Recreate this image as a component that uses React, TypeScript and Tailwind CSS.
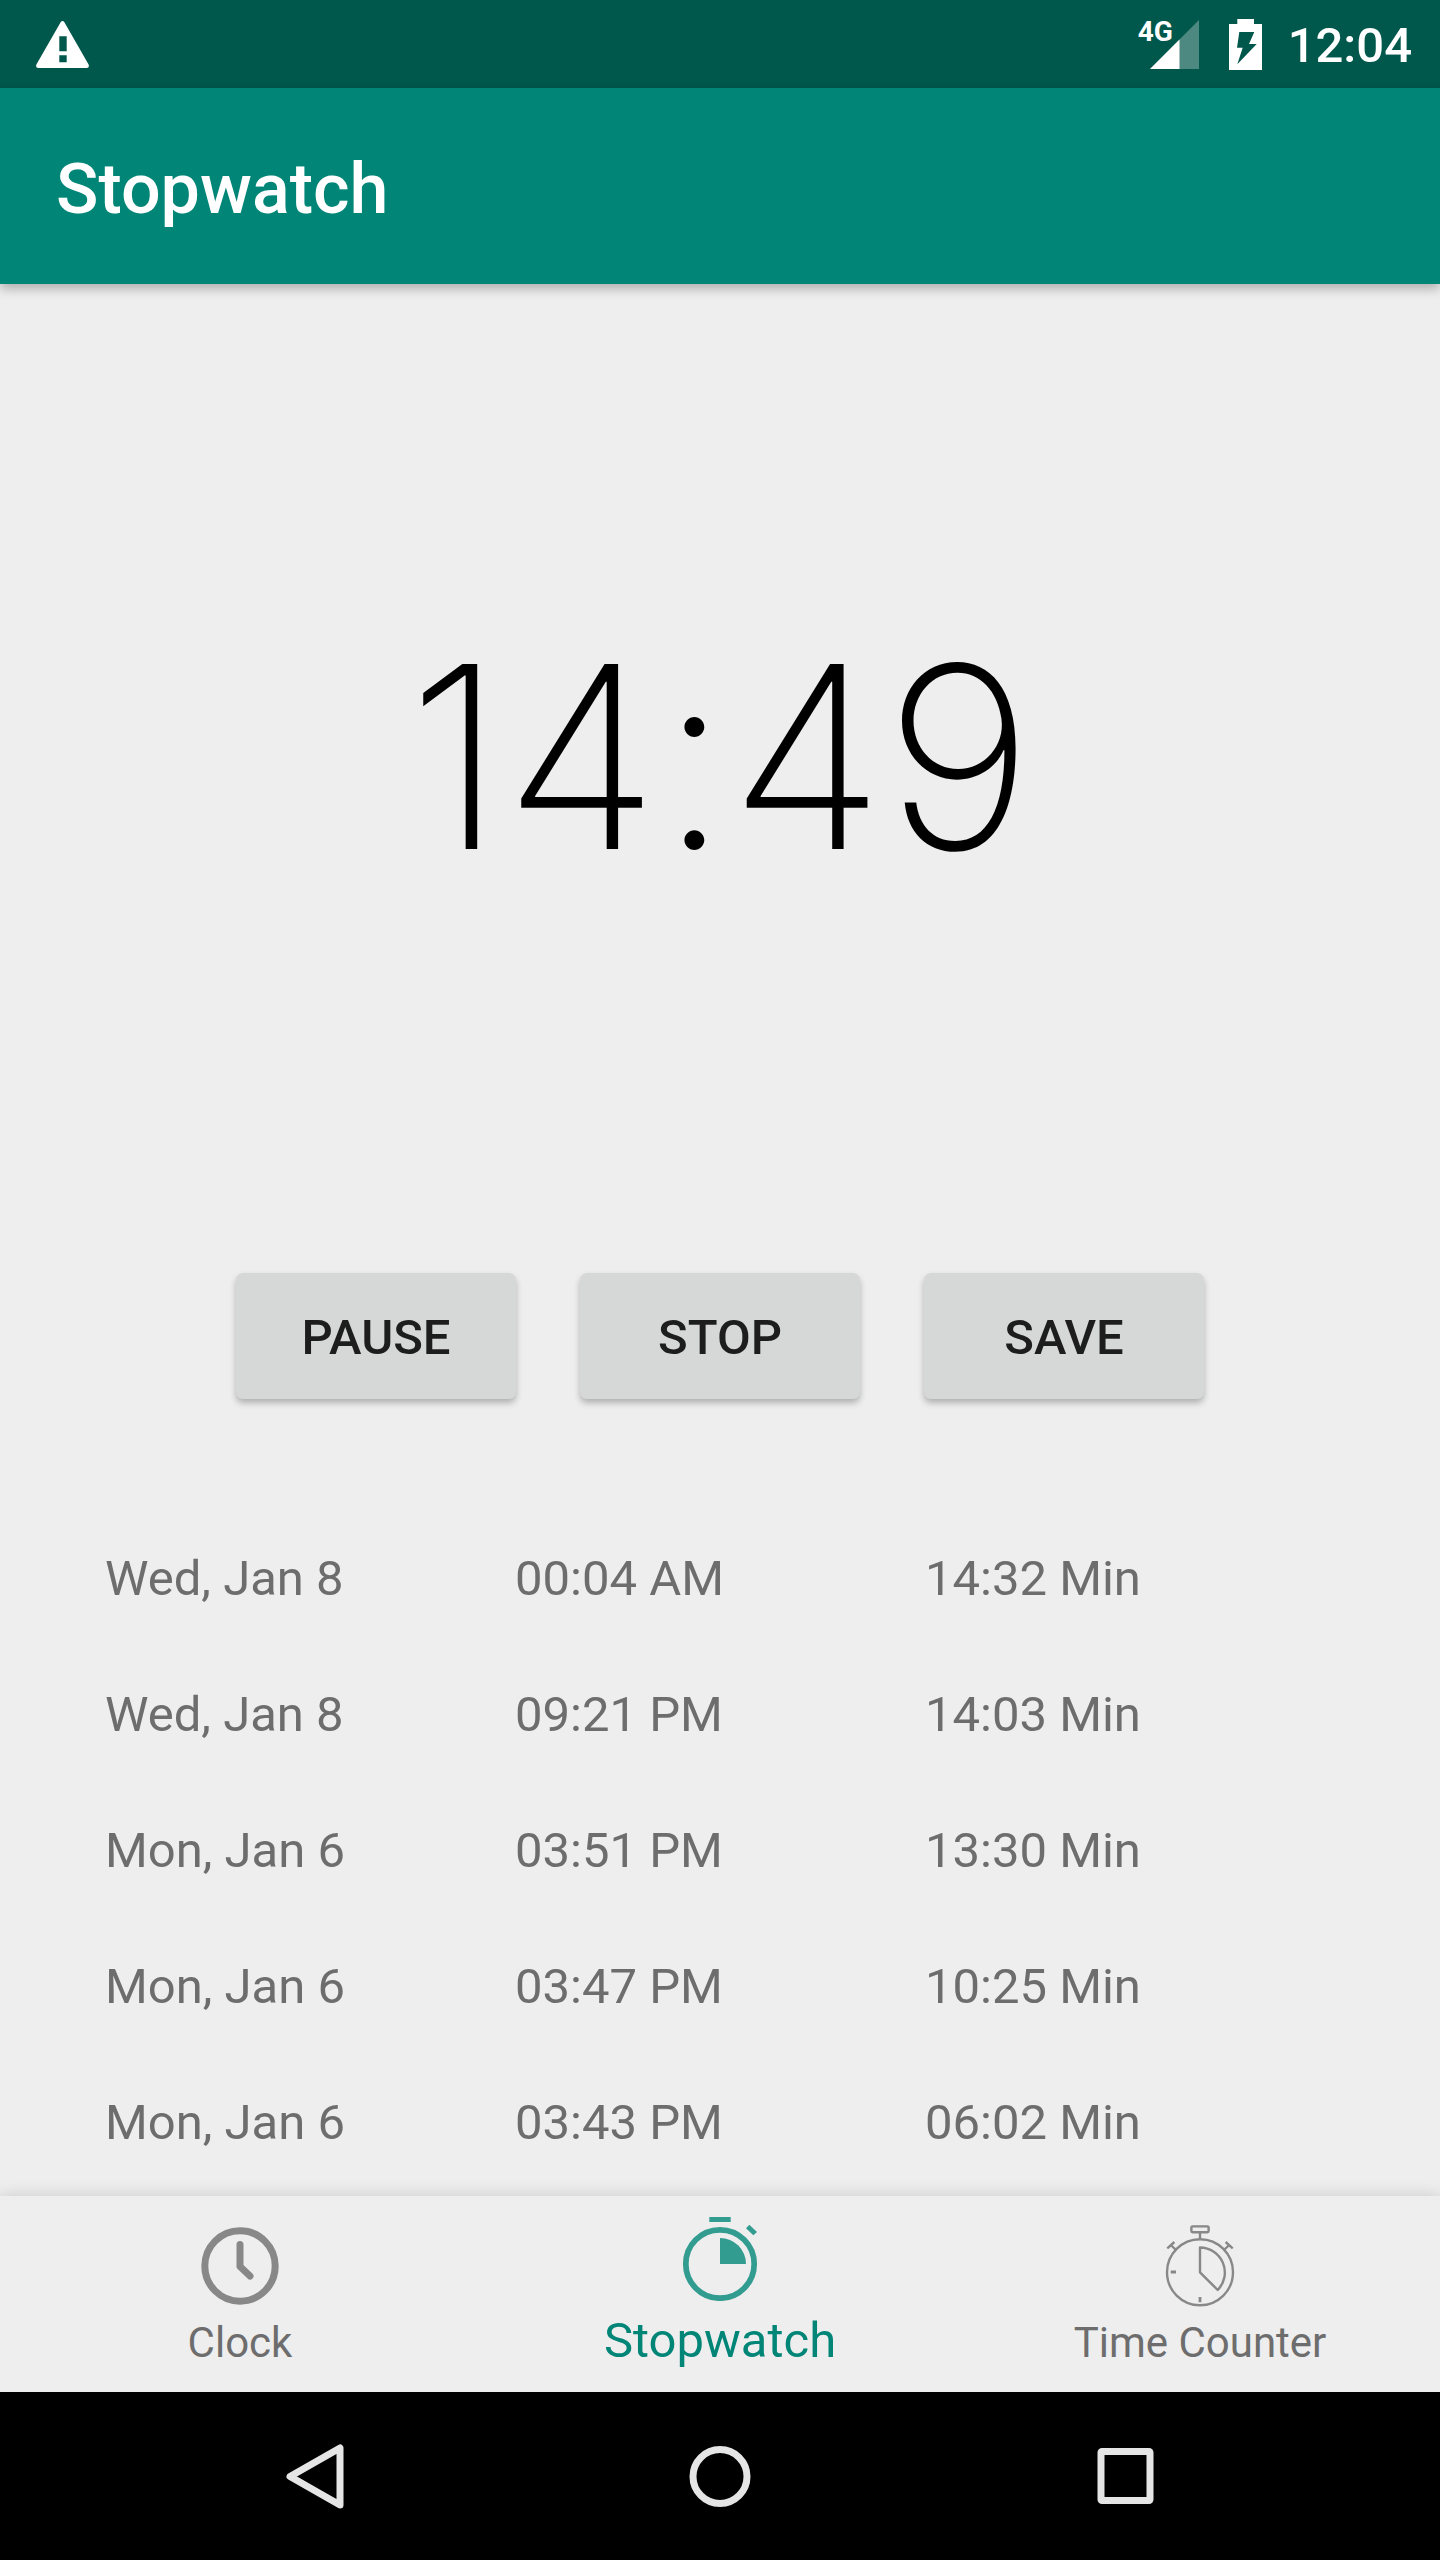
import { useState, type ReactNode } from "react";

function WarningIcon() {
  return (
    <svg className="h-[47px] w-[53px]" viewBox="0 0 53 47" fill="#ffffff" aria-hidden="true">
      <path
        fillRule="evenodd"
        d="M24.6 1.2 Q26.5 -1 28.4 1.2 L52.6 43.4 Q53.8 47 50.6 47 H2.4 Q-0.8 47 0.4 43.4 Z M23.3 15.3 V30.3 H30.7 V15.3 Z M23.3 34.3 V41.3 H30.7 V34.3 Z"
      />
    </svg>
  );
}

function SignalIcon() {
  return (
    <div className="relative">
      <svg className="h-[49px] w-[49px]" viewBox="0 0 49 49" aria-hidden="true">
        <path d="M49 0 V49 H0 Z" fill="#ffffff" fillOpacity="0.3" />
        <path d="M29.5 19.5 V49 H0 Z" fill="#ffffff" />
      </svg>
      <span className="absolute -top-1 -left-3 text-[28px] leading-[32px] font-bold">4G</span>
    </div>
  );
}

function BatteryIcon() {
  return (
    <svg className="h-[51px] w-[33px]" viewBox="0 0 33 51" fill="#ffffff" aria-hidden="true">
      <path
        fillRule="evenodd"
        d="M8.3 0 H25 V5 H33 V51 H0 V5 H8.3 Z M10.3 13 L8 28.7 H13.7 L8.3 45.3 L27.7 25 H20 L25.3 13 Z"
      />
    </svg>
  );
}

function ClockIcon() {
  return (
    <svg className="size-[84px]" viewBox="0 0 84 84" fill="none" stroke="#888888" strokeWidth="7" aria-hidden="true">
      <circle cx="42" cy="42" r="35.2" />
      <path d="M42 20.5 V42.5 L52 52" strokeLinecap="round" strokeLinejoin="round" />
    </svg>
  );
}

function StopwatchIcon() {
  return (
    <svg className="size-[84px]" viewBox="0 0 84 84" fill="#329c90" aria-hidden="true">
      <circle cx="42" cy="47" r="34.2" fill="none" stroke="#329c90" strokeWidth="5.7" />
      <rect x="31.3" y="0" width="21.4" height="5" />
      <path d="M42 47 V21 A26 26 0 0 1 68 47 Z" />
      <path d="M71.3 7.7 L79 15 L75.3 18.3 L68 11.3 Z" />
    </svg>
  );
}

function CounterIcon() {
  return (
    <svg className="size-[84px]" viewBox="0 0 84 84" fill="none" stroke="#888888" strokeWidth="2.4" aria-hidden="true">
      <circle cx="42" cy="48.3" r="33" />
      <rect x="33.4" y="2.4" width="17.2" height="5.8" rx="1.2" />
      <path d="M42 8.5 V15.5" />
      <path d="M18 26 L12.8 21 M9.3 24.3 L16.4 18" />
      <path d="M66 26 L71.2 21 M74.7 24.3 L67.6 18" />
      <path d="M42 48.3 V23.5 A25 25 0 0 1 59.7 66 Z" strokeLinejoin="round" />
      <path d="M12.7 48 H18 M42 73 V78.3" strokeWidth="2.8" />
    </svg>
  );
}

type Tab = { name: string; icon: ReactNode };

const tabs: Tab[] = [
  { name: "Clock", icon: <ClockIcon /> },
  { name: "Stopwatch", icon: <StopwatchIcon /> },
  { name: "Time Counter", icon: <CounterIcon /> },
];

const records = [
  ["Wed, Jan 8", "00:04 AM", "14:32 Min"],
  ["Wed, Jan 8", "09:21 PM", "14:03 Min"],
  ["Mon, Jan 6", "03:51 PM", "13:30 Min"],
  ["Mon, Jan 6", "03:47 PM", "10:25 Min"],
  ["Mon, Jan 6", "03:43 PM", "06:02 Min"],
];

export default function App() {
  const [active, setActive] = useState("Stopwatch");

  return (
    <div className="flex min-h-screen flex-col bg-[#eeeeee] font-['Roboto',sans-serif]">
      <div className="flex h-[88px] items-center justify-between bg-[#00574b] pr-7 pl-9 text-white">
        <WarningIcon />
        <div className="flex items-center">
          <SignalIcon />
          <div className="ml-[30px]">
            <BatteryIcon />
          </div>
          <time className="ml-[26px] pt-1 text-[49px] leading-[56px] font-medium">12:04</time>
        </div>
      </div>

      <header className="z-10 flex h-[196px] items-center bg-[#008577] px-14 pt-1.5 shadow-[0_5px_10px_rgba(0,0,0,0.26)]">
        <h1 className="text-[70px] leading-[84px] font-medium text-white">Stopwatch</h1>
      </header>

      <main className="flex grow flex-col">
        <div className="flex grow items-center justify-center pb-2">
          <time className="font-['Inter',sans-serif] text-[254px] leading-[312px] font-[150] text-black [font-feature-settings:'calt'_0]">
            14:49
          </time>
        </div>

        <div className="flex justify-center gap-16 pt-9">
          {["PAUSE", "STOP", "SAVE"].map((label) => (
            <button
              key={label}
              type="button"
              className="h-[126px] w-[280px] rounded-[7px] bg-[#d6d8d7] pt-1 text-[49px] leading-[56px] font-medium text-[#1d1d1d] shadow-[0_4px_6px_rgba(0,0,0,0.26)]"
            >
              {label}
            </button>
          ))}
        </div>

        <div className="px-[105px] pt-28 pb-[5px]">
          <table className="w-full table-fixed text-left text-[49px] leading-[56px] text-[#6d6d6d]">
            <tbody>
              {records.map(([date, time, length]) => (
                <tr key={date + time} className="h-[136px]">
                  <td>{date}</td>
                  <td>{time}</td>
                  <td>{length}</td>
                </tr>
              ))}
            </tbody>
          </table>
        </div>
      </main>

      <nav className="grid h-[196px] grid-cols-3 bg-[#eeeeee] shadow-[0_0_16px_rgba(0,0,0,0.16)]">
        {tabs.map((tab) => (
          <button
            key={tab.name}
            type="button"
            onClick={() => setActive(tab.name)}
            className={
              tab.name === active
                ? "flex flex-col items-center gap-3 pt-[21px] text-[49px] leading-[56px] text-[#008577]"
                : "flex flex-col items-center gap-[7px] pt-7 text-[42px] leading-[56px] text-[#6d6d6d]"
            }
          >
            {tab.icon}
            <span>{tab.name}</span>
          </button>
        ))}
      </nav>

      <div className="z-10 grid h-[168px] grid-cols-3 place-items-center bg-black px-28">
        <button type="button" aria-label="Back">
          <svg className="size-[84px]" viewBox="0 0 84 84" fill="none" stroke="#e5e5e5" strokeWidth="7">
            <path d="M17 42.5 L67 14 V71 Z" strokeLinejoin="round" />
          </svg>
        </button>
        <button type="button" aria-label="Home">
          <svg className="size-[84px]" viewBox="0 0 84 84" fill="none" stroke="#e5e5e5" strokeWidth="7">
            <circle cx="42" cy="42.5" r="27" />
          </svg>
        </button>
        <button type="button" aria-label="Recent apps">
          <svg className="size-[84px]" viewBox="0 0 84 84" fill="none" stroke="#e5e5e5" strokeWidth="7">
            <rect x="18" y="17.5" width="49" height="49" rx="1" strokeLinejoin="round" />
          </svg>
        </button>
      </div>
    </div>
  );
}
